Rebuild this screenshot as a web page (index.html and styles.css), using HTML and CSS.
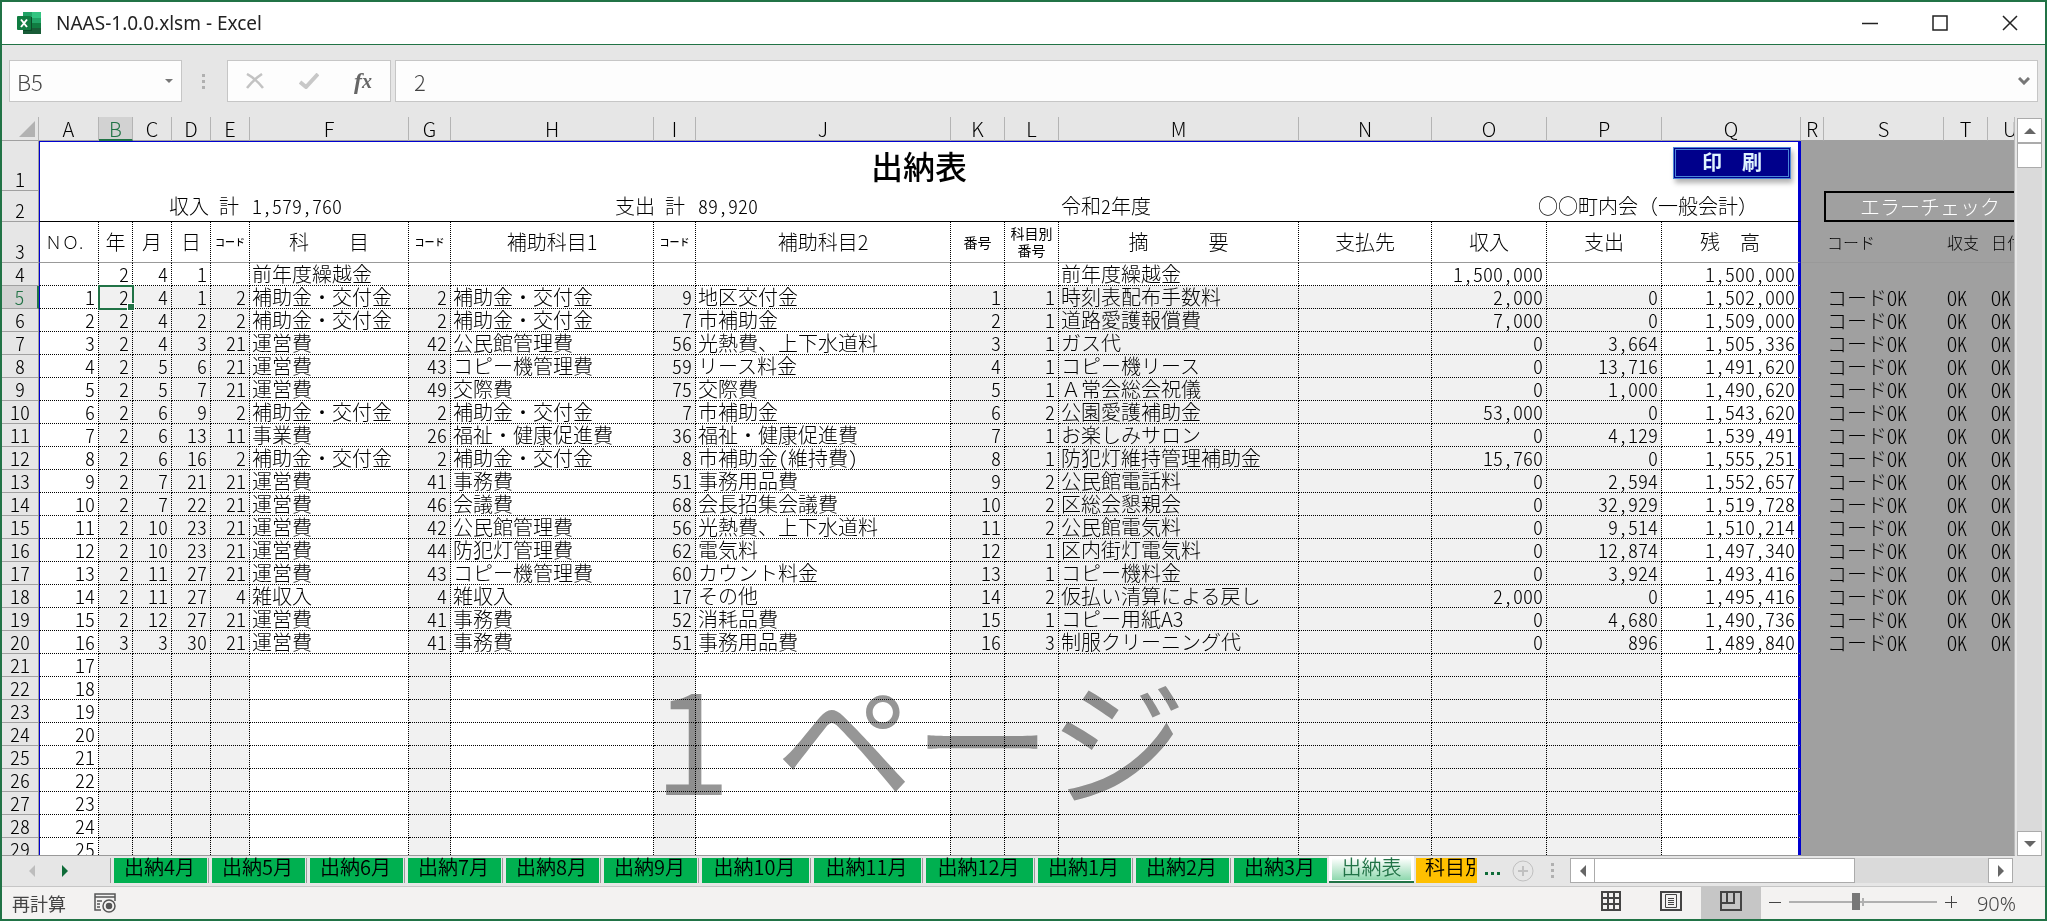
FILE: index.html
```html
<!DOCTYPE html>
<html lang="ja">
<head>
    <meta charset="UTF-8">
    <meta name="viewport" content="width=device-width, initial-scale=1.0">
    <title>NAAS-1.0.0.xlsm - Excel</title>
    <link rel="stylesheet" href="styles.css">
</head>
<body>
    <header class="title-bar">
        <svg class="logo" width="24" height="22" viewBox="0 0 24 22">
            <rect x="6" y="0" width="9" height="6" fill="#21a366"/>
            <rect x="15" y="0" width="9" height="6" fill="#33c481"/>
            <rect x="6" y="6" width="9" height="5" fill="#107c41"/>
            <rect x="15" y="6" width="9" height="5" fill="#21a366"/>
            <rect x="6" y="11" width="9" height="5" fill="#185c37"/>
            <rect x="15" y="11" width="9" height="5" fill="#107c41"/>
            <rect x="6" y="16" width="18" height="6" fill="#185c37"/>
            <rect x="6" y="5" width="9" height="14" fill="#0b4a28"/>
            <rect x="0" y="4" width="14" height="14" rx="1" fill="#107c41"/>
            <path d="M4 7.5L10 15M10 7.5L4 15" stroke="#fff" stroke-width="2" fill="none"/>
        </svg>
        <h1>NAAS-1.0.0.xlsm - Excel</h1>
        <div class="window-buttons">
            <button aria-label="最小化"><svg width="16" height="16" viewBox="0 0 16 16"><path d="M0 8.5H16"/></svg></button>
            <button aria-label="最大化"><svg width="16" height="16" viewBox="0 0 16 16"><path d="M1 1H15V15H1Z"/></svg></button>
            <button aria-label="閉じる"><svg width="16" height="16" viewBox="0 0 16 16"><path d="M1 1L15 15M15 1L1 15"/></svg></button>
        </div>
    </header>

    <div class="formula-bar">
        <div class="name-box">
            <input type="text" value="B5" aria-label="名前ボックス">
            <button aria-label="名前の一覧"><svg width="8" height="4" viewBox="0 0 8 4"><path d="M0 0H8L4 4Z" fill="#777"/></svg></button>
        </div>
        <span class="grip"></span>
        <div class="formula-tools">
            <button aria-label="キャンセル"><svg width="18" height="16" viewBox="0 0 18 16"><path d="M1 1Q10 6 17 15M16 1Q7 7 1 15" stroke="#c3c3c3" stroke-width="2.5" fill="none"/></svg></button>
            <button aria-label="入力"><svg width="20" height="16" viewBox="0 0 20 16"><path d="M1 9L7 14L19 1" stroke="#c8c8c8" stroke-width="4" fill="none"/></svg></button>
            <button class="fx" aria-label="関数の挿入">f<span>x</span></button>
        </div>
        <div class="formula-input">
            <input type="text" value="2" aria-label="数式バー">
            <button aria-label="数式バーの展開"><svg width="12" height="8" viewBox="0 0 12 8"><path d="M1 1L6 6L11 1" stroke="#777" stroke-width="3" fill="none"/></svg></button>
        </div>
    </div>

    <main class="workspace">
        <div class="sheet">
            <table class="grid">
                <colgroup>
                    <col class="w-head"><col class="w-a"><col class="w-b"><col class="w-c"><col class="w-c"><col class="w-c"><col class="w-f">
                    <col class="w-g"><col class="w-h"><col class="w-g"><col class="w-j"><col class="w-k"><col class="w-k"><col class="w-m">
                    <col class="w-n"><col class="w-o"><col class="w-o"><col class="w-q"><col class="w-r"><col class="w-s"><col class="w-t"><col class="w-u">
                </colgroup>
                <thead>
                    <tr>
                        <th class="corner"><svg width="16" height="16" viewBox="0 0 16 16"><path d="M16 0V16H0Z" fill="#b2b2b2"/></svg></th>
                        <th>A</th><th class="active">B</th><th>C</th><th>D</th><th>E</th><th>F</th><th>G</th><th>H</th><th>I</th><th>J</th><th>K</th>
                        <th>L</th><th>M</th><th>N</th><th>O</th><th>P</th><th>Q</th><th>R</th><th>S</th><th>T</th><th>U</th>
                    </tr>
                </thead>
                <tbody id="rows">
                    <tr class="row-title">
                        <th>1</th>
                        <td class="title" colspan="17">出納表<button class="print-btn">印　刷</button></td>
                        <td class="out" colspan="4"></td>
                    </tr>
                    <tr class="row-total">
                        <th>2</th>
                        <td class="first label" colspan="5">収入 計</td>
                        <td class="half" colspan="2">1,579,760</td>
                        <td class="label" colspan="2">支出 計</td>
                        <td class="half" colspan="3">89,920</td>
                        <td class="half" colspan="2">令和2年度</td>
                        <td class="group last" colspan="3">○○町内会（一般会計）</td>
                        <td class="out"></td>
                        <td class="out check" colspan="3">エラーチェック</td>
                    </tr>
                    <tr class="row-names">
                        <th>3</th>
                        <td class="first no">ＮＯ.</td><td>年</td><td>月</td><td>日</td><td class="tiny">コード</td><td>科　　目</td>
                        <td class="tiny">コード</td><td>補助科目1</td><td class="tiny">コード</td><td>補助科目2</td>
                        <td class="small">番号</td><td class="small">科目別<br>番号</td><td>摘　　　要</td><td>支払先</td>
                        <td>収入</td><td>支出</td><td class="last">残　高</td>
                        <td class="out"></td><td class="out">コード</td><td class="out">収支</td><td class="out">日付</td>
                    </tr>
                </tbody>
            </table>
            <div class="page-mark">1 <span>ページ</span></div>
        </div>
        <div class="v-scroll">
            <button aria-label="上へ"><svg width="12" height="6" viewBox="0 0 12 6"><path d="M0 6L6 0L12 6Z"/></svg></button>
            <div class="thumb"></div>
            <button class="end" aria-label="下へ"><svg width="12" height="6" viewBox="0 0 12 6"><path d="M0 0L6 6L12 0Z"/></svg></button>
        </div>
    </main>

    <nav class="tab-bar">
        <button class="arrow" aria-label="前のシート"><svg width="6" height="12" viewBox="0 0 6 12"><path d="M6 0V12L0 6Z" fill="#bdbdbd"/></svg></button>
        <button class="arrow" aria-label="次のシート"><svg width="6" height="12" viewBox="0 0 6 12"><path d="M0 0V12L6 6Z" fill="#0e6b38"/></svg></button>
        <div class="tabs">
            <button class="tab">出納4月</button>
            <button class="tab">出納5月</button>
            <button class="tab">出納6月</button>
            <button class="tab">出納7月</button>
            <button class="tab">出納8月</button>
            <button class="tab">出納9月</button>
            <button class="tab wide">出納10月</button>
            <button class="tab wide">出納11月</button>
            <button class="tab wide">出納12月</button>
            <button class="tab">出納1月</button>
            <button class="tab">出納2月</button>
            <button class="tab">出納3月</button>
            <button class="tab current"><span>出納表</span></button>
            <button class="tab cut">科目別</button>
        </div>
        <button class="more" aria-label="他のシート"><i></i><i></i><i></i></button>
        <button class="add" aria-label="新しいシート"><svg width="22" height="22" viewBox="0 0 22 22"><circle cx="11" cy="11" r="10" stroke="#c0c0c0" fill="none"/><path d="M11 6V16M6 11H16" stroke="#c0c0c0" stroke-width="2"/></svg></button>
        <span class="grip"></span>
        <div class="h-scroll">
            <button aria-label="左へ"><svg width="6" height="12" viewBox="0 0 6 12"><path d="M6 0V12L0 6Z"/></svg></button>
            <div class="thumb"></div>
            <button class="end" aria-label="右へ"><svg width="6" height="12" viewBox="0 0 6 12"><path d="M0 0V12L6 6Z"/></svg></button>
        </div>
    </nav>

    <footer class="status-bar">
        <span class="mode">再計算</span>
        <button class="macro" aria-label="マクロの記録">
            <svg width="22" height="20" viewBox="0 0 22 20" fill="none" stroke="#555" stroke-width="1.5">
                <path d="M7 17H1V1H21V8M1 4H21" /><path d="M3 8H8M3 11H6M3 14H6"/>
                <circle cx="15" cy="13" r="6"/><circle cx="15" cy="13" r="2.5" fill="#555"/>
            </svg>
        </button>
        <div class="views">
            <button aria-label="標準"><svg width="20" height="20" viewBox="0 0 20 20"><path d="M1 1H19V19H1ZM1 7H19M1 13H19M7 1V19M13 1V19"/></svg></button>
            <button aria-label="ページ レイアウト"><svg width="22" height="20" viewBox="0 0 22 20"><path d="M1 1H21V19H1Z"/><path class="thin" d="M5.5 3.5H16.5V16.5H5.5ZM8 7.5H14M8 9.5H14M8 11.5H14M8 13.5H14"/></svg></button>
            <button class="on" aria-label="改ページ プレビュー"><svg width="22" height="20" viewBox="0 0 22 20"><path d="M1 1H21V19H1ZM1 12H14V1M7 1V12"/></svg></button>
        </div>
        <button class="zoom-btn" aria-label="縮小"><svg width="12" height="12" viewBox="0 0 12 12"><path d="M0 6.5H12"/></svg></button>
        <input class="zoom" type="range" min="0" max="100" value="45" aria-label="ズーム">
        <button class="zoom-btn" aria-label="拡大"><svg width="12" height="12" viewBox="0 0 12 12"><path d="M0 6.5H12M6.5 0V12"/></svg></button>
        <span class="percent">90%</span>
    </footer>

    <script>
        // 年,月,日,コード,科目,コード,補助科目1,コード,補助科目2,番号,科目別番号,摘要,支払先,収入,支出,残高
        const entries = [
            [2, 4, 1, 2, '補助金・交付金', 2, '補助金・交付金', 9, '地区交付金', 1, 1, '時刻表配布手数料', '', '2,000', '0', '1,502,000'],
            [2, 4, 2, 2, '補助金・交付金', 2, '補助金・交付金', 7, '市補助金', 2, 1, '道路愛護報償費', '', '7,000', '0', '1,509,000'],
            [2, 4, 3, 21, '運営費', 42, '公民館管理費', 56, '光熱費、上下水道料', 3, 1, 'ガス代', '', '0', '3,664', '1,505,336'],
            [2, 5, 6, 21, '運営費', 43, 'コピー機管理費', 59, 'リース料金', 4, 1, 'コピー機リース', '', '0', '13,716', '1,491,620'],
            [2, 5, 7, 21, '運営費', 49, '交際費', 75, '交際費', 5, 1, 'Ａ常会総会祝儀', '', '0', '1,000', '1,490,620'],
            [2, 6, 9, 2, '補助金・交付金', 2, '補助金・交付金', 7, '市補助金', 6, 2, '公園愛護補助金', '', '53,000', '0', '1,543,620'],
            [2, 6, 13, 11, '事業費', 26, '福祉・健康促進費', 36, '福祉・健康促進費', 7, 1, 'お楽しみサロン', '', '0', '4,129', '1,539,491'],
            [2, 6, 16, 2, '補助金・交付金', 2, '補助金・交付金', 8, '市補助金(維持費)', 8, 1, '防犯灯維持管理補助金', '', '15,760', '0', '1,555,251'],
            [2, 7, 21, 21, '運営費', 41, '事務費', 51, '事務用品費', 9, 2, '公民館電話料', '', '0', '2,594', '1,552,657'],
            [2, 7, 22, 21, '運営費', 46, '会議費', 68, '会長招集会議費', 10, 2, '区総会懇親会', '', '0', '32,929', '1,519,728'],
            [2, 10, 23, 21, '運営費', 42, '公民館管理費', 56, '光熱費、上下水道料', 11, 2, '公民館電気料', '', '0', '9,514', '1,510,214'],
            [2, 10, 23, 21, '運営費', 44, '防犯灯管理費', 62, '電気料', 12, 1, '区内街灯電気料', '', '0', '12,874', '1,497,340'],
            [2, 11, 27, 21, '運営費', 43, 'コピー機管理費', 60, 'カウント料金', 13, 1, 'コピー機料金', '', '0', '3,924', '1,493,416'],
            [2, 11, 27, 4, '雑収入', 4, '雑収入', 17, 'その他', 14, 2, '仮払い清算による戻し', '', '2,000', '0', '1,495,416'],
            [2, 12, 27, 21, '運営費', 41, '事務費', 52, '消耗品費', 15, 1, 'コピー用紙A3', '', '0', '4,680', '1,490,736'],
            [3, 3, 30, 21, '運営費', 41, '事務費', 51, '事務用品費', 16, 3, '制服クリーニング代', '', '0', '896', '1,489,840']
        ];
        const textColumns = [5, 7, 9, 12, 13];
        const whiteColumns = [0, 5, 7, 9, 16];
        const body = document.getElementById('rows');

        const addRow = (rowNumber, cells, checks, shaded) => {
            const tr = document.createElement('tr');
            const th = document.createElement('th');
            th.textContent = rowNumber;
            if (rowNumber === 5) th.className = 'active';
            tr.appendChild(th);
            for (let i = 0; i < 17; i++) {
                const td = document.createElement('td');
                td.textContent = cells[i] === undefined ? '' : cells[i];
                if (!textColumns.includes(i)) td.classList.add('num');
                if (i === 9) td.classList.add('half');
                if (shaded && !whiteColumns.includes(i)) td.classList.add('shade');
                if (i === 0) td.classList.add('first');
                if (i === 16) td.classList.add('last');
                if (rowNumber === 5 && i === 1) td.classList.add('selected');
                tr.appendChild(td);
            }
            ['', ...checks].forEach(text => {
                const td = document.createElement('td');
                td.className = 'out half';
                td.textContent = text;
                tr.appendChild(td);
            });
            body.appendChild(tr);
        };

        addRow(4, ['', 2, 4, 1, '', '前年度繰越金', '', '', '', '', '', '', '前年度繰越金', '', '1,500,000', '', '1,500,000'], ['', '', ''], false);
        for (let n = 1; n <= 25; n++) {
            const entry = entries[n - 1];
            addRow(n + 4, [n, ...(entry || [])], entry ? ['コードOK', 'OK', 'OK'] : ['', '', ''], true);
        }
    </script>
</body>
</html>
```
FILE: styles.css
```css
* {
    box-sizing: border-box;
}

body {
    margin: 0;
    height: 100vh;
    display: flex;
    flex-direction: column;
    overflow: hidden;
    border: 2px solid #217346;
    background-color: #e6e6e6;
    color: #000;
    font-family: "Noto Sans CJK JP", sans-serif;
    font-weight: 300;
}

button, input {
    margin: 0;
    padding: 0;
    border: none;
    background: none;
    color: inherit;
    font: inherit;
}

button {
    display: flex;
    align-items: center;
    justify-content: center;
    cursor: pointer;
}

svg {
    display: block;
}

/* タイトルバー */
.title-bar {
    display: flex;
    align-items: center;
    flex: none;
    height: 43px;
    padding-left: 15px;
    background-color: #fff;
    border-bottom: 1px solid #217346;
}

.title-bar h1 {
    margin: 0 0 0 15px;
    font-family: "Noto Sans", sans-serif;
    font-size: 19px;
    font-weight: 400;
    color: #222;
}

.window-buttons {
    display: flex;
    margin-left: auto;
}

.window-buttons button {
    width: 70px;
    height: 42px;
}

.window-buttons path {
    fill: none;
    stroke: #222;
    stroke-width: 1.5;
}

/* 数式バー */
.formula-bar {
    display: flex;
    flex: none;
    height: 72px;
    padding: 15px 7px 15px 7px;
}

.name-box, .formula-tools, .formula-input {
    display: flex;
    align-items: center;
    background-color: #fdfdfd;
    border: 1px solid #c6c6c6;
}

.name-box {
    width: 173px;
    padding: 0 8px 0 7px;
    font-size: 22px;
    color: #444;
}

.name-box input, .formula-input input {
    flex: 1;
    min-width: 0;
    height: 36px;
}

.grip {
    align-self: center;
    width: 3px;
    height: 15px;
    margin: 0 22px 0 20px;
    background: repeating-linear-gradient(#b0b0b0 0 3px, transparent 3px 6px);
}

.formula-tools {
    width: 164px;
    margin-right: 4px;
    justify-content: space-around;
}

.formula-tools button {
    width: 40px;
    height: 36px;
}

.formula-tools .fx {
    font: italic 700 24px "Liberation Serif", serif;
    color: #666;
}

.fx span {
    font-size: 20px;
}

.formula-input {
    flex: 1;
    padding: 0 7px 0 18px;
    font-size: 22px;
    color: #444;
}

/* シート */
.workspace {
    display: flex;
    flex: 1;
    min-height: 0;
}

.sheet {
    position: relative;
    flex: 1;
    min-width: 0;
    overflow: hidden;
    border-bottom: 1px solid #999;
    border-right: 1px solid #bbb;
    background-color: #a0a0a0;
}

.grid {
    width: 1px;
    table-layout: fixed;
    border-collapse: separate;
    border-spacing: 0;
    font-size: 20px;
    line-height: 22px;
}

.w-head { width: 37px; }
.w-a { width: 60px; }
.w-b { width: 34px; }
.w-c { width: 39px; }
.w-f { width: 159px; }
.w-g { width: 42px; }
.w-h { width: 203px; }
.w-j { width: 255px; }
.w-k { width: 54px; }
.w-m { width: 240px; }
.w-n { width: 133px; }
.w-o { width: 115px; }
.w-q { width: 139px; }
.w-r { width: 23px; }
.w-s { width: 120px; }
.w-t { width: 44px; }
.w-u { width: 45px; }

.grid th, .grid td {
    height: 23px;
    padding: 0;
    white-space: nowrap;
}

.grid th {
    background-color: #e6e6e6;
    border-right: 1px solid #a0a0a0;
    border-bottom: 1px solid #a0a0a0;
    font-weight: 300;
    text-align: center;
    vertical-align: bottom;
}

/* 半角幅の数字 */
.grid tbody th, .half, .num {
    font-feature-settings: "hwid";
}

.grid thead th {
    height: 24px;
    border-right-color: #b4b4b4;
}

.grid .corner {
    padding: 0 3px 3px 17px;
}

.grid th.active {
    background-color: #d2d2d2;
    color: #217346;
}

.grid thead .active {
    border-bottom: 2px solid #217346;
    line-height: 21px;
}

.grid tbody .active {
    border-right: 2px solid #217346;
}

.grid td {
    padding-left: 2px;
    background-color: #fff;
    border-right: 1px dotted #000;
    border-bottom: 1px dotted #000;
}

.grid .first {
    border-left: 1px solid #0000d0;
}

.grid .last {
    border-right: 3px solid #0000d0;
}

.grid .num {
    padding-right: 3px;
    text-align: right;
}

.grid .shade {
    background-color: #f1f1f1;
}

.grid .out {
    padding-left: 3px;
    background-color: #a0a0a0;
    border: none;
}

.grid .selected {
    position: relative;
    outline: 2px solid #217346;
    outline-offset: -1px;
}

.selected::after {
    content: "";
    position: absolute;
    right: -3px;
    bottom: -3px;
    width: 6px;
    height: 6px;
    background-color: #217346;
    border: 1px solid #fff;
}

.grid .row-title .title {
    position: relative;
    height: 50px;
    padding: 0 0 4px;
    border: solid #0000d0;
    border-width: 1px 3px 0 1px;
    font-size: 32px;
    font-weight: 500;
    text-align: center;
}

.print-btn {
    position: absolute;
    top: 5px;
    right: 7px;
    width: 118px;
    height: 32px;
    padding-bottom: 3px;
    background-color: #00008b;
    border: 3px double #4a86d8;
    box-shadow: 2px 4px 5px rgba(0, 0, 0, 0.3);
    color: #e0f4ff;
    font-size: 20px;
    font-weight: 700;
    line-height: 20px;
}

.grid .row-total td {
    height: 31px;
    border-right: none;
    border-bottom: 1px solid #000;
}

.grid .row-total .label {
    padding-right: 11px;
    text-align: right;
    word-spacing: normal;
    font-feature-settings: "hwid";
}

.grid .row-total .group {
    padding-right: 40px;
    border-right: 3px solid #0000d0;
    text-align: right;
}

.grid .row-total .out {
    border-bottom: none;
}

.grid .row-total .check {
    border: 2px solid #000;
    color: #fff;
    text-align: center;
}

.grid .row-names td {
    height: 41px;
    padding: 0;
    border-bottom: 1px solid #999;
    text-align: center;
}

.grid .row-names .no {
    padding-left: 5px;
    font-size: 17px;
    text-align: left;
}

.grid .row-names .tiny {
    font-size: 10px;
    font-weight: 500;
}

.grid .row-names .small {
    font-size: 14px;
    line-height: 17px;
    font-weight: 400;
}

.grid .row-names .out {
    padding-left: 3px;
    font-size: 16px;
    text-align: left;
}

.page-mark {
    position: absolute;
    top: 528px;
    left: 652px;
    color: #969696;
    font-size: 138px;
    font-weight: 400;
    line-height: 180px;
    white-space: nowrap;
    mix-blend-mode: multiply;
    pointer-events: none;
}

.page-mark span {
    margin-left: 14px;
}

/* スクロールバー */
.v-scroll {
    display: flex;
    flex-direction: column;
    flex: none;
    width: 25px;
    margin: 1px 3px 0 2px;
    background-color: #dadada;
}

.v-scroll button, .h-scroll button, .thumb {
    flex: none;
    width: 25px;
    height: 25px;
    background-color: #fff;
    border: 1px solid #ababab;
}

.v-scroll path, .h-scroll path {
    fill: #666;
}

.v-scroll .end {
    margin-top: auto;
}

/* シート見出し */
.tab-bar {
    display: flex;
    flex: none;
    height: 31px;
    padding: 2px 32px 0 18px;
    border-bottom: 1px solid #c6c6c6;
}

.arrow {
    width: 28px;
    height: 26px;
    padding-right: 4px;
}

.arrow + .arrow {
    width: 35px;
    padding-right: 2px;
}

.tabs {
    display: flex;
    flex: none;
    margin-left: 28px;
}

.tab {
    width: 93px;
    height: 25px;
    margin: 0 2px 0 3px;
    padding: 0 2px 7px 0;
    background-color: #00b050;
    box-shadow: -3px 0 #e6e6e6, -4px 0 #999;
    font-size: 20px;
    line-height: 18px;
    font-weight: 350;
}

.tab.wide {
    width: 107px;
}

.tab.current {
    width: 85px;
    height: 28px;
    margin: -3px 0 0 0;
    padding: 4px 3px 3px;
    background-color: #fff;
    border-bottom: 2px solid #217346;
    box-shadow: none;
    color: #217346;
}

.current span {
    width: 100%;
    height: 22px;
    background: linear-gradient(#fff, #8fd8ae);
}

.tab.cut {
    width: 61px;
    margin: 0 0 0 2px;
    padding-left: 9px;
    justify-content: flex-start;
    overflow: hidden;
    white-space: nowrap;
    background-color: #ffc000;
    box-shadow: none;
}

.more {
    gap: 3px;
    width: 31px;
    height: 30px;
}

.more i {
    width: 3px;
    height: 3px;
    background-color: #0e6b38;
}

.add {
    width: 30px;
    height: 26px;
}

.tab-bar .grip {
    margin: 0 16px 3px 13px;
}

.h-scroll {
    display: flex;
    flex: 1;
    height: 25px;
    background-color: #dadada;
}

.h-scroll .thumb {
    width: 59%;
    margin-left: -1px;
}

.h-scroll .end {
    margin-left: auto;
}

/* ステータスバー */
.status-bar {
    display: flex;
    align-items: center;
    flex: none;
    height: 32px;
    padding: 0 29px 0 10px;
    background-color: #f3f2f1;
    color: #444;
    font-size: 18px;
}

.mode {
    font-weight: 400;
}

.macro {
    margin-left: 28px;
}

.views {
    display: flex;
    height: 100%;
    margin-left: auto;
}

.views button {
    width: 60px;
    padding-bottom: 4px;
}

.views .on {
    background-color: #c6c6c6;
}

.views path {
    fill: none;
    stroke: #444;
    stroke-width: 2;
}

.views .thin {
    stroke-width: 1;
}

.zoom-btn {
    width: 28px;
    padding-bottom: 2px;
}

.zoom-btn path {
    stroke: #444;
    fill: none;
}

.zoom {
    appearance: none;
    width: 148px;
    height: 18px;
    margin-bottom: 3px;
    background: linear-gradient(#b0b0b0, #b0b0b0) 0 50% / 100% 2px no-repeat,
        linear-gradient(#b0b0b0, #b0b0b0) 50% 50% / 2px 8px no-repeat;
}

.zoom::-webkit-slider-thumb {
    appearance: none;
    width: 8px;
    height: 17px;
    background-color: #777;
}

.percent {
    margin-left: 12px;
    font-family: "Noto Sans", sans-serif;
    font-size: 20px;
}
```
